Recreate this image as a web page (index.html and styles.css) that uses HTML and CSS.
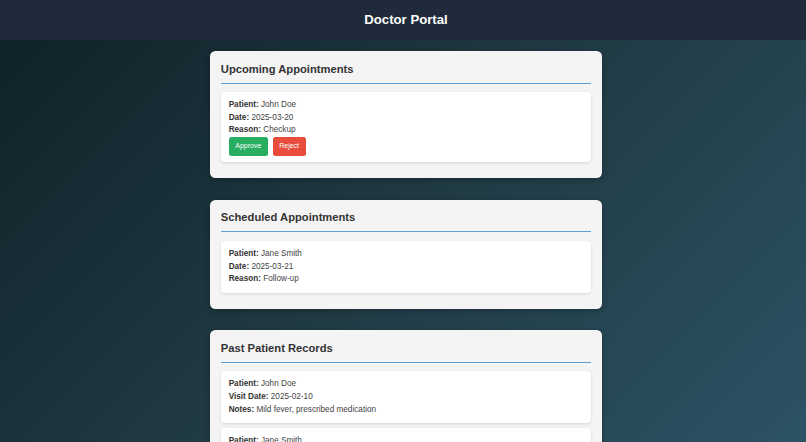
FILE: index.html
```html
<!DOCTYPE html>
<html lang="en">
<head>
<meta charset="utf-8">
<title>Doctor Portal</title>
<link rel="stylesheet" href="styles.css">
</head>
<body>
<header class="topbar">
  <h1 class="topbar-title">Doctor Portal</h1>
</header>
<main class="main">
  <section class="card">
    <h2 class="card-title">Upcoming Appointments</h2>
    <div class="item">
      <p class="line"><strong>Patient:</strong> John Doe</p>
      <p class="line"><strong>Date:</strong> 2025-03-20</p>
      <p class="line"><strong>Reason:</strong> Checkup</p>
      <div class="actions">
        <button class="btn btn-approve">Approve</button>
        <button class="btn btn-reject">Reject</button>
      </div>
    </div>
  </section>

  <section class="card">
    <h2 class="card-title">Scheduled Appointments</h2>
    <div class="item">
      <p class="line"><strong>Patient:</strong> Jane Smith</p>
      <p class="line"><strong>Date:</strong> 2025-03-21</p>
      <p class="line"><strong>Reason:</strong> Follow-up</p>
    </div>
  </section>

  <section class="card">
    <h2 class="card-title">Past Patient Records</h2>
    <div class="item">
      <p class="line"><strong>Patient:</strong> John Doe</p>
      <p class="line"><strong>Visit Date:</strong> 2025-02-10</p>
      <p class="line"><strong>Notes:</strong> Mild fever, prescribed medication</p>
    </div>
    <div class="item">
      <p class="line"><strong>Patient:</strong> Jane Smith</p>
      <p class="line"><strong>Visit Date:</strong> 2025-02-15</p>
      <p class="line"><strong>Notes:</strong> Routine blood test, all normal</p>
    </div>
  </section>
</main>
</body>
</html>
```

FILE: styles.css
```css
html, body {
  margin: 0;
  padding: 0;
}

body {
  font-family: "Liberation Sans", Arial, sans-serif;
  background: linear-gradient(135deg, #0f2027 0%, #203a43 50%, #2c5364 100%) fixed;
  min-height: 100vh;
  color: #444;
}

.topbar {
  background: #1f2b3a;
  height: 40px;
  display: flex;
  align-items: center;
  justify-content: center;
  padding-left: 6px;
}

.topbar-title {
  margin: 0;
  font-size: 13.2px;
  line-height: 16px;
  font-weight: bold;
  color: #ffffff;
}

.main {
  padding: 11px 0 0 6px;
}

.card {
  width: 370.3px;
  margin: 0 auto 21.8px;
  background: #f4f4f4;
  border-radius: 5.5px;
  padding: 10.5px 10.5px 11px;
  box-shadow: 0 2px 6px rgba(0, 0, 0, 0.25);
}

.card-title {
  margin: 0 0 8.1px;
  padding-bottom: 7px;
  font-size: 11.2px;
  line-height: 14px;
  font-weight: bold;
  color: #333;
  border-bottom: 1.4px solid #5a9fd6;
}

.item {
  background: #ffffff;
  border-radius: 4px;
  padding: 7.6px 7.8px 6.6px;
  margin-bottom: 5px;
  box-shadow: 0 1px 3px rgba(0, 0, 0, 0.12);
}

.line {
  margin: 0;
  font-size: 8.2px;
  line-height: 12.6px;
  color: #444;
}

.line strong {
  color: #333;
}

.actions {
  display: flex;
  gap: 4.7px;
}

.btn {
  font-family: "Liberation Sans", Arial, sans-serif;
  font-size: 7px;
  line-height: 8.2px;
  padding: 5.2px 6.6px;
  border: none;
  border-radius: 2.5px;
  color: #ffffff;
  margin: 0;
}

.btn-approve {
  background: #27ae60;
}

.btn-reject {
  background: #e74c3c;
}
```
